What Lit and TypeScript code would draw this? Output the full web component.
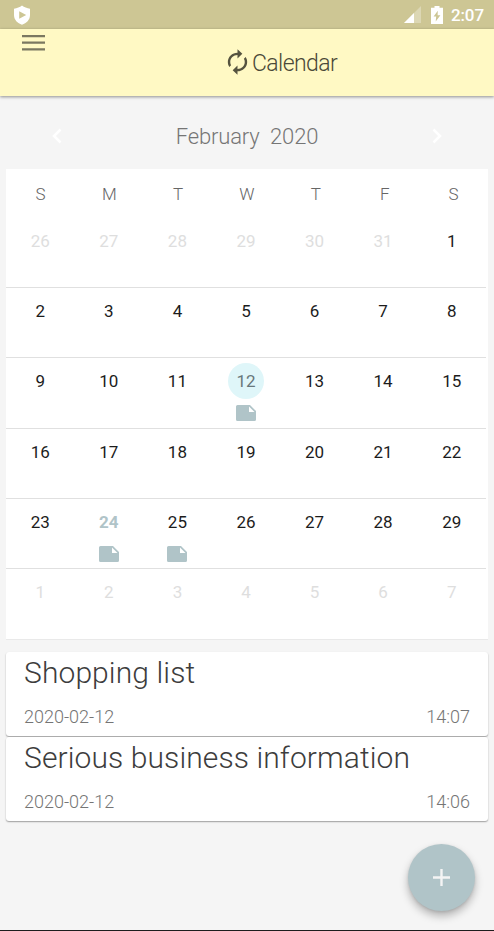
import { LitElement, html, css, nothing } from "lit";
import { customElement, property } from "lit/decorators.js";
import { classMap } from "lit/directives/class-map.js";

interface Day {
  n: number;
  outside: boolean;
  selected: boolean;
  today: boolean;
  note: boolean;
}

const WEEKDAYS = ["S", "M", "T", "W", "T", "F", "S"];

// February 2020 starts on a Saturday; six weeks from January 26.
const WEEKS: Day[][] = Array.from({ length: 6 }, (_, w) =>
  Array.from({ length: 7 }, (_, d) => {
    const i = w * 7 + d - 5;
    const outside = i < 1 || i > 29;
    const n = i < 1 ? 31 + i : i > 29 ? i - 29 : i;
    return {
      n,
      outside,
      selected: !outside && n === 12,
      today: !outside && n === 24,
      note: !outside && [12, 24, 25].includes(n),
    };
  })
);

const NOTES = [
  { title: "Shopping list", date: "2020-02-12", time: "14:07" },
  { title: "Serious business information", date: "2020-02-12", time: "14:06" },
];

@customElement("status-bar")
class StatusBar extends LitElement {
  static styles = css`
    :host { display: flex; align-items: center; height: 29px; padding: 0 10px 0 13px; box-sizing: border-box; background: #cdc694; color: #fff; }
    svg { display: block; fill: currentColor; }
    .spacer { flex: 1; }
    .battery { margin: 0 8px 0 10px; }
    .time { font: 500 17px/29px Roboto, sans-serif; padding-top: 1px; box-sizing: border-box; height: 29px; letter-spacing: -.1px; }
  `;
  render() {
    return html`
      <svg width="18" height="20" viewBox="0 0 18 20"><path fill-rule="evenodd" d="M9 .5C11.200 2.200 14 3.300 17 3.700V10c0 5-3.600 8.200-8 9.700C4.600 18.200 1 15 1 10V3.700C4 3.300 6.800 2.200 9 .5zM6.200 6.200v7.600L13.200 10z"/></svg>
      <div class="spacer"></div>
      <svg width="17" height="17" viewBox="0 0 17 17"><path opacity=".3" d="M0 17L17 0v17z"/><path d="M0 17L10 7v10z"/></svg>
      <svg class="battery" width="12" height="18" viewBox="0 0 12 18"><path fill-rule="evenodd" d="M3.500 0h5v1.800H12V18H0V1.800h3.500zM6.800 4.800L2.600 10.600h2.600L4.700 15.600 9.400 9.300H6.600z"/></svg>
      <div class="time">2:07</div>
    `;
  }
}

@customElement("app-header")
class AppHeader extends LitElement {
  static styles = css`
    :host { display: flex; height: 67px; box-sizing: border-box; background: #fff9c4; position: relative; box-shadow: 0 1px 3px rgba(0,0,0,.42); }
    .menu { display: block; margin: 6px 0 0 22px; }
    .title { display: flex; align-items: center; margin: 1px 0 0 178px; height: 67px; color: #4a4838; font: 300 23px/30px Roboto, sans-serif; letter-spacing: -.6px; }
    .sync { margin: 0 0 3px; flex: none; }
  `;
  render() {
    return html`
      <svg class="menu" width="23" height="17" viewBox="0 0 23 17"><path d="M0 1.100h23M0 7.700h23M0 14.300h23" stroke="#7b7860" stroke-width="2.200"/></svg>
      <div class="title">
        <svg class="sync" width="29" height="28" viewBox="0 0 24 24" preserveAspectRatio="none" fill="#55533f"><path d="M12 6v3l4-4-4-4v3c-4.420 0-8 3.580-8 8 0 1.570.46 3.030 1.240 4.260L6.700 14.800c-.45-.83-.7-1.790-.7-2.800 0-3.310 2.690-6 6-6zm6.760 1.740L17.300 9.200c.44.840.7 1.790.7 2.800 0 3.310-2.690 6-6 6v-3l-4 4 4 4v-3c4.420 0 8-3.580 8-8 0-1.570-.46-3.030-1.240-4.260z"/></svg>
        <span>Calendar</span>
      </div>
    `;
  }
}

@customElement("month-calendar")
class MonthCalendar extends LitElement {
  static styles = css`
    :host { display: block; padding: 0 6px; font-family: Roboto, sans-serif; }
    .nav { display: flex; justify-content: space-between; align-items: center; height: 73px; padding: 7px 45px 0; box-sizing: border-box; }
    .nav svg { display: block; fill: none; stroke: #fff; stroke-width: 2.500; }
    .month { color: #757575; font-size: 22px; font-weight: 300; white-space: pre; line-height: 28px; padding-top: 2px; letter-spacing: -.15px; }
    .card { background: #fff; height: 471px; box-sizing: border-box; border-bottom: 1px solid #e9e9e9; }
    .heads { display: grid; grid-template-columns: repeat(7, 1fr); height: 48px; line-height: 51px; text-align: center; font-weight: 300; font-size: 17px; color: #666; }
    .week { display: grid; grid-template-columns: repeat(7, 1fr); width: 480px; height: 70.3px; box-sizing: border-box; border-bottom: 1px solid #e0e0e0; }
    .heads + .week { height: 71px; }
    .week:last-child { border-bottom: 0; }
    .day { display: flex; flex-direction: column; align-items: center; padding-top: 5px; font-size: 17px; color: #1c1c1c; }
    .heads + .week .day { padding-top: 6px; }
    .num { width: 36px; height: 36px; line-height: 37px; text-align: center; border-radius: 50%; flex: none; }
    .outside { color: #dedede; }
    .selected .num { background: #dff6f9; color: #68787b; }
    .today .num { color: #b0c4c8; font-weight: 700; }
    .note { display: block; margin-top: 6px; fill: #b0c4c8; }
  `;
  render() {
    return html`
      <div class="nav">
        <svg width="12" height="16" viewBox="0 0 12 16"><path d="M9.500 1.500L3 8l6.500 6.500"/></svg>
        <div class="month">February  2020</div>
        <svg width="12" height="16" viewBox="0 0 12 16"><path d="M2.500 1.500L9 8l-6.500 6.500"/></svg>
      </div>
      <div class="card">
        <div class="heads">${WEEKDAYS.map((d) => html`<div>${d}</div>`)}</div>
        ${WEEKS.map((w) => html`<div class="week">${w.map((d) => html`
          <div class=${classMap({ day: true, outside: d.outside, selected: d.selected, today: d.today })}>
            <div class="num">${d.n}</div>
            ${d.note ? html`<svg class="note" width="20" height="16" viewBox="0 0 20 16"><path fill-rule="evenodd" d="M1.500 0H14L20 6V14.500a1.500 1.500 0 0 1-1.500 1.500H1.500a1.500 1.500 0 0 1-1.500-1.500V1.500a1.500 1.500 0 0 1 1.500-1.500zM13 1.500V7h5.500z"/></svg>` : nothing}
          </div>`)}</div>`)}
      </div>
    `;
  }
}

@customElement("note-card")
class NoteCard extends LitElement {
  @property({ attribute: false }) note = NOTES[0];
  static styles = css`
    :host { display: block; height: 84px; padding: 0 18px; box-sizing: border-box; border-radius: 3px; background: #fff; box-shadow: 0 1px 1.500px rgba(0,0,0,.36); font: 300 18px/24px Roboto, sans-serif; color: #757575; }
    .title { font-size: 30px; line-height: 42px; height: 42px; color: #3d3d3d; white-space: nowrap; letter-spacing: .1px; }
    .meta { display: flex; justify-content: space-between; padding-top: 11px; }
  `;
  render() {
    return html`
      <div class="title">${this.note.title}</div>
      <div class="meta"><span>${this.note.date}</span><span>${this.note.time}</span></div>
    `;
  }
}

@customElement("app-root")
class AppRoot extends LitElement {
  static styles = css`
    :host { display: block; position: relative; width: 494px; height: 931px; box-sizing: border-box; overflow: hidden; background: #f5f5f5; border-bottom: 1px solid #1d1d1d; }
    .notes { display: flex; flex-direction: column; gap: 1.300px; padding: 12px 6px 0; }
    .fab { position: absolute; right: 19px; bottom: 19px; width: 67px; height: 67px; border: 0; padding: 0; border-radius: 50%; background: #b0c4c8; display: grid; place-items: center; box-shadow: 0 5px 9px rgba(0,0,0,.27), 0 1px 3px rgba(0,0,0,.1); }
  `;
  render() {
    return html`
      <status-bar></status-bar>
      <app-header></app-header>
      <month-calendar></month-calendar>
      <div class="notes">${NOTES.map((n) => html`<note-card .note=${n}></note-card>`)}</div>
      <button class="fab" aria-label="Add note">
        <svg width="17" height="17" viewBox="0 0 17 17"><path d="M8.500 0v17M0 8.500h17" stroke="#f4f4f4" stroke-width="2.400"/></svg>
      </button>
    `;
  }
}
